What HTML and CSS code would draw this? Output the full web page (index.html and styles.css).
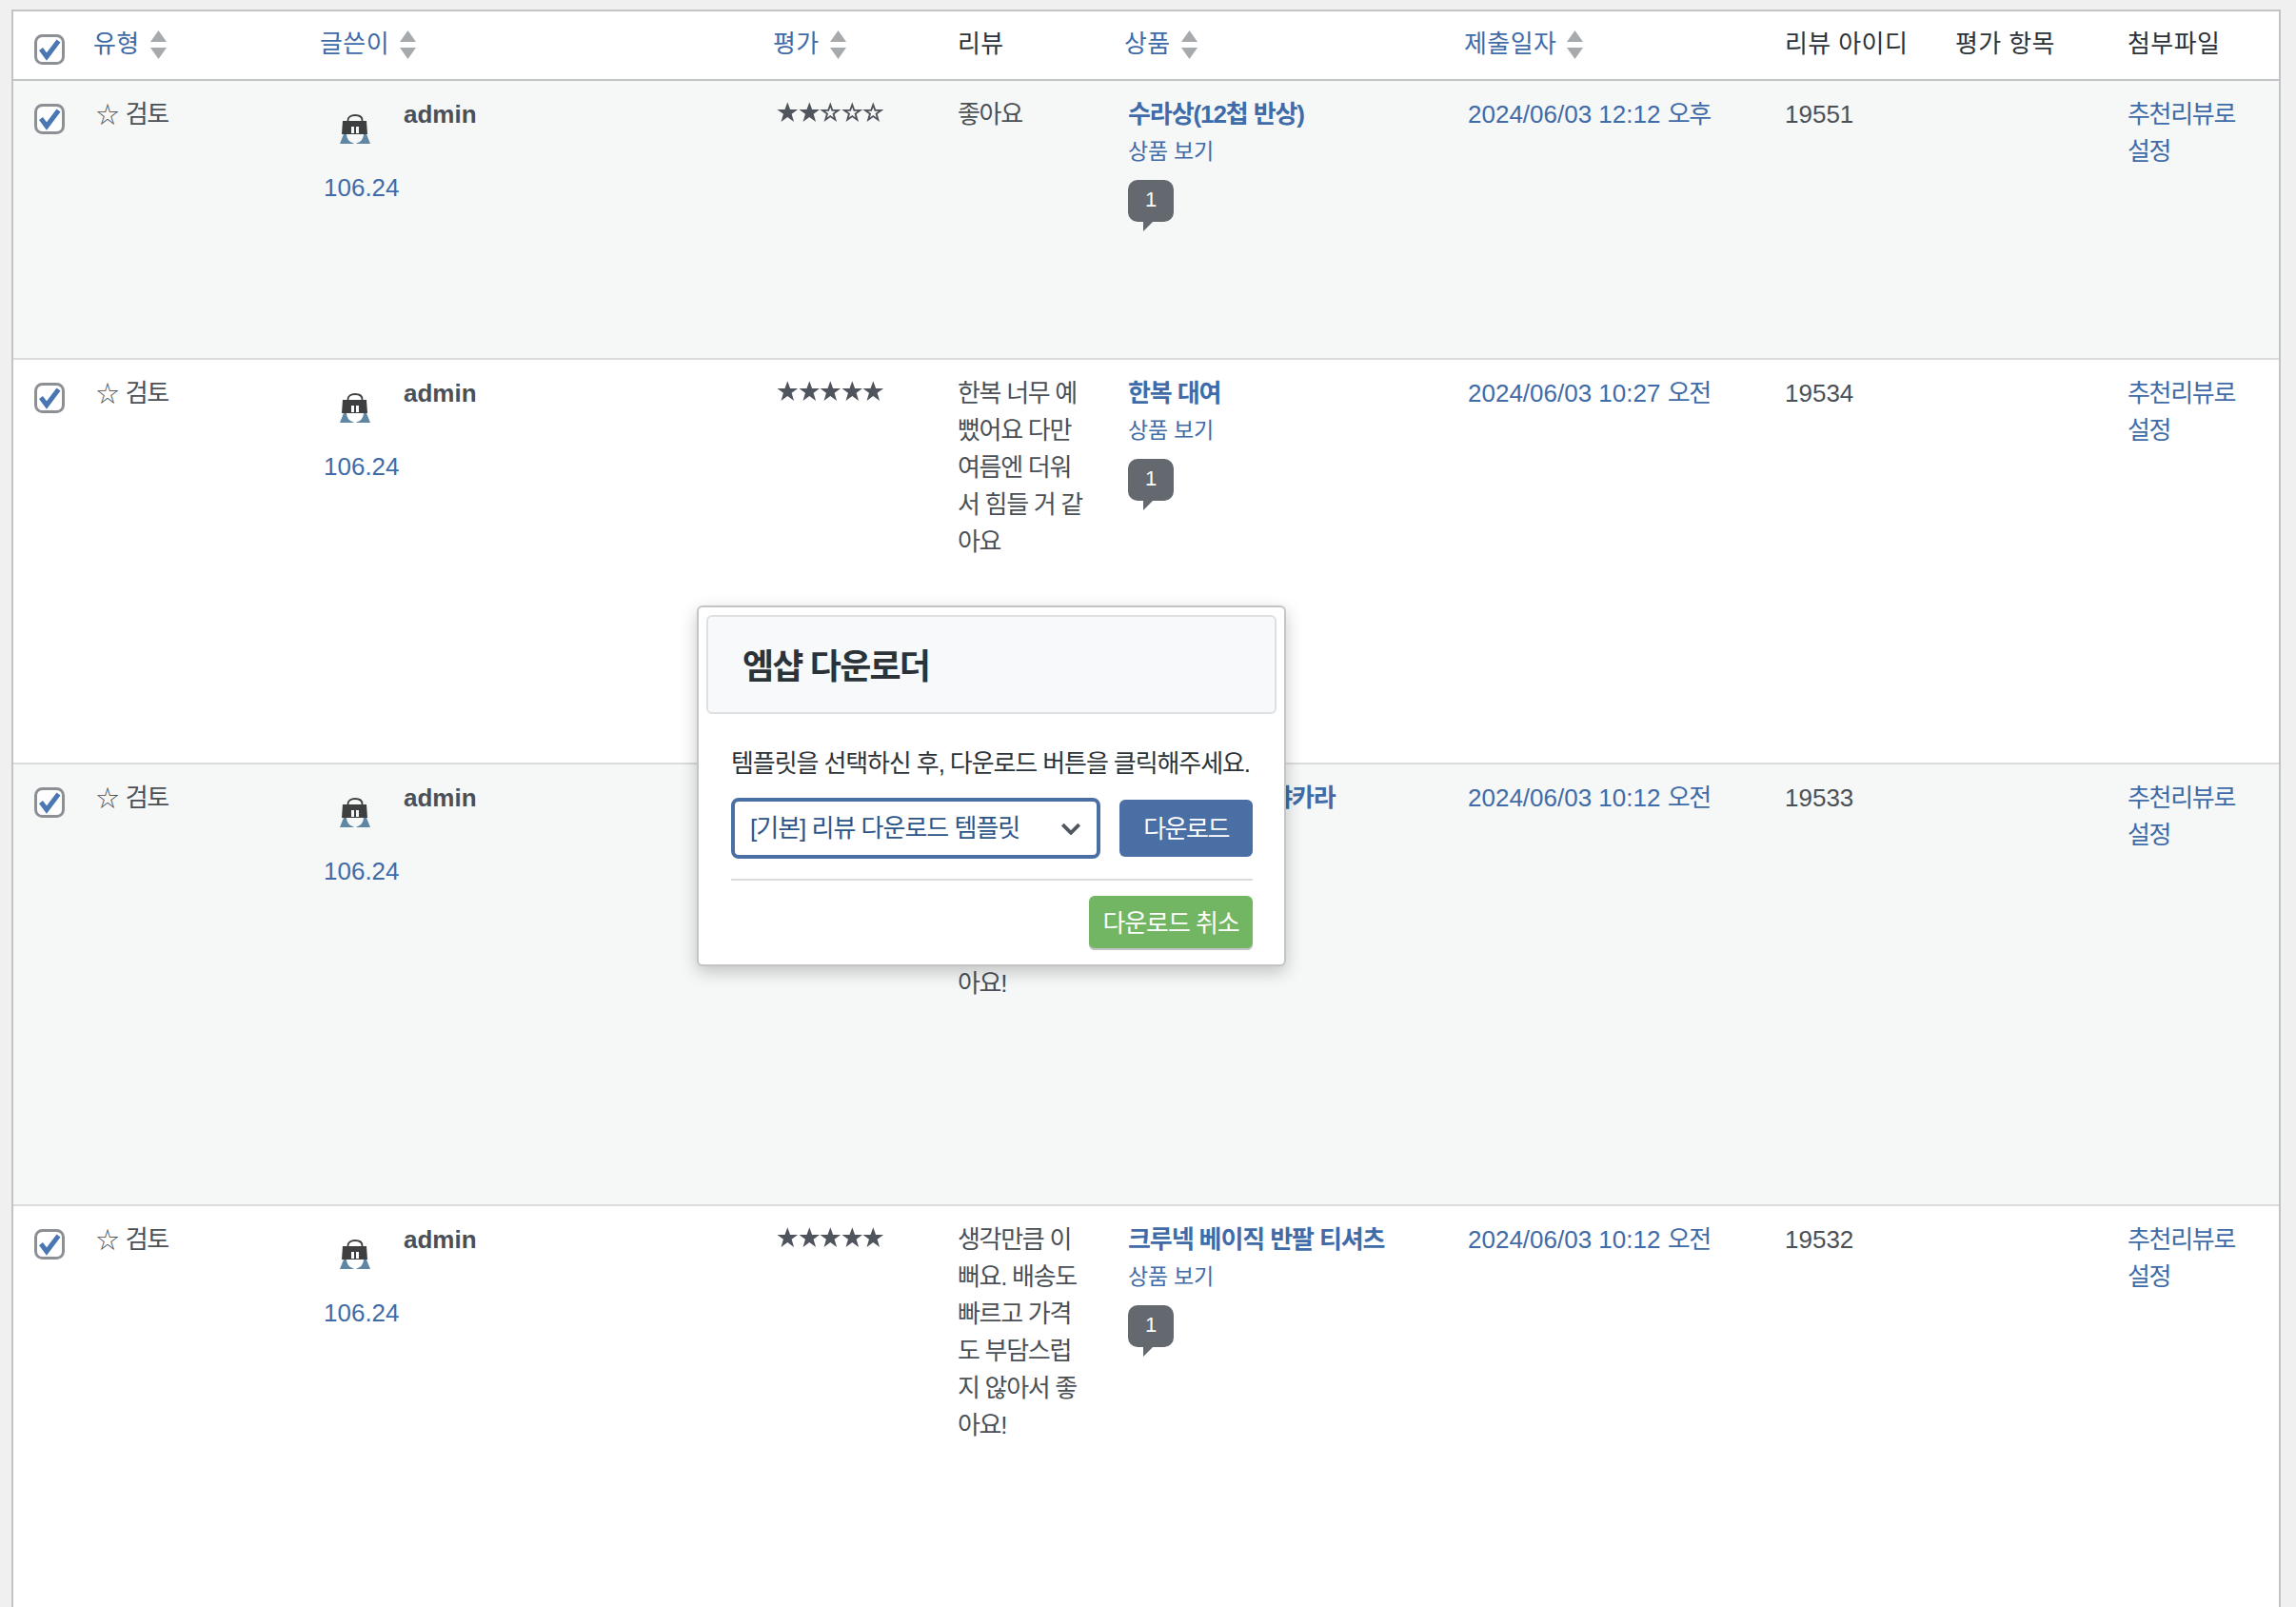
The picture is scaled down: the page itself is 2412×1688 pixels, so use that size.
FILE: index.html
```html
<!DOCTYPE html>
<html lang="ko">
<head>
<meta charset="utf-8">
<title>리뷰</title>
<link rel="stylesheet" href="styles.css">
</head>
<body>
<svg class="defs" width="0" height="0" aria-hidden="true">
  <symbol id="check" viewBox="0 0 32 32">
    <rect x="1.500" y="1.500" width="29" height="29" rx="7" fill="#fff" fill-opacity=".75" stroke="#8c8f94" stroke-width="3"/>
    <path d="M7 15.500l6 8L25.500 7" fill="none" stroke="#4a77b4" stroke-width="5"/>
  </symbol>
  <symbol id="bag" viewBox="0 0 32 32">
    <path d="M8.500 8V6.500C8.500 3 11.500 1 16 1s7.500 2 7.500 5.500V8" fill="none" stroke="#3e3f41" stroke-width="1.800"/>
    <path fill-rule="evenodd" d="M3 7h25l1 14H2zM12 13v7h3v-7zM17 13v7h3v-7z" fill="#3e3f41"/>
    <path d="M0 31L4 21h3a9 9.500 0 0 0 7.500 9.400L14.500 31zM32 31L28 21h-3a9 9.500 0 0 1 -7.500 9.400L17.500 31z" fill="#5f87a3"/>
  </symbol>
  <symbol id="bubble" viewBox="0 0 48 54">
    <path d="M10 0h28a10 10 0 0 1 10 10v24a10 10 0 0 1 -10 10H26L16 54V44h-6a10 10 0 0 1 -10 -10V10A10 10 0 0 1 10 0z" fill="#646970"/>
  </symbol>
  <symbol id="sort" viewBox="0 0 17 30">
    <path d="M8.500 0L17 12H0zM0 18h17L8.500 30z" fill="#a7aaad"/>
  </symbol>
  <symbol id="star-full" viewBox="0 0 24 24">
    <path d="M12 .500l3 8.200h8.500l-6.900 5.200 2.600 8.600L12 17.400l-7.200 5.100 2.600-8.600L.500 8.700H9z" fill="#50545c"/>
  </symbol>
  <symbol id="star-empty" viewBox="0 0 24 24">
    <path d="M12 3.500l2.200 6.200h6.600l-5.300 4 1.900 6.500L12 16.300l-5.400 3.900 1.900-6.500-5.300-4h6.600z" fill="none" stroke="#50545c" stroke-width="2"/>
  </symbol>
</svg>

<main class="page">
  <table class="reviews">
    <colgroup>
      <col class="c-check"><col class="c-type"><col class="c-author"><col class="c-rating"><col class="c-review"><col class="c-product"><col class="c-date"><col class="c-id"><col class="c-items"><col class="c-files">
    </colgroup>
    <thead>
      <tr>
        <th class="check"><svg class="cb"><use href="#check"/></svg></th>
        <th class="sortable first"><a href="#">유형<svg class="sort"><use href="#sort"/></svg></a></th>
        <th class="sortable"><a href="#">글쓴이<svg class="sort"><use href="#sort"/></svg></a></th>
        <th class="sortable"><a href="#">평가<svg class="sort"><use href="#sort"/></svg></a></th>
        <th>리뷰</th>
        <th class="sortable"><a href="#">상품<svg class="sort"><use href="#sort"/></svg></a></th>
        <th class="sortable"><a href="#">제출일자<svg class="sort"><use href="#sort"/></svg></a></th>
        <th>리뷰 아이디</th>
        <th>평가 항목</th>
        <th>첨부파일</th>
      </tr>
    </thead>
    <tbody>
      <tr class="row-a stripe">
        <td class="check"><svg class="cb"><use href="#check"/></svg></td>
        <td class="ko"><span class="star">☆</span> 검토</td>
        <td><div class="author"><svg class="avatar"><use href="#bag"/></svg><strong>admin</strong></div><a class="ip" href="#">106.24</a></td>
        <td class="stars"><svg><use href="#star-full"/></svg><svg><use href="#star-full"/></svg><svg><use href="#star-empty"/></svg><svg><use href="#star-empty"/></svg><svg><use href="#star-empty"/></svg></td>
        <td class="ko">좋아요</td>
        <td><a class="pname" href="#">수라상(12첩 반상)</a><a class="view" href="#">상품 보기</a><div class="bubble"><svg><use href="#bubble"/></svg><span>1</span></div></td>
        <td><a href="#">2024/06/03 12:12 <span class="ko">오후</span></a></td>
        <td>19551</td>
        <td></td>
        <td class="ko"><a href="#">추천리뷰로<br>설정</a></td>
      </tr>
      <tr class="row-b">
        <td class="check"><svg class="cb"><use href="#check"/></svg></td>
        <td class="ko"><span class="star">☆</span> 검토</td>
        <td><div class="author"><svg class="avatar"><use href="#bag"/></svg><strong>admin</strong></div><a class="ip" href="#">106.24</a></td>
        <td class="stars"><svg><use href="#star-full"/></svg><svg><use href="#star-full"/></svg><svg><use href="#star-full"/></svg><svg><use href="#star-full"/></svg><svg><use href="#star-full"/></svg></td>
        <td class="ko">한복 너무 예<br>뻤어요 다만<br>여름엔 더워<br>서 힘들 거 같<br>아요</td>
        <td><a class="pname" href="#">한복 대여</a><a class="view" href="#">상품 보기</a><div class="bubble"><svg><use href="#bubble"/></svg><span>1</span></div></td>
        <td><a href="#">2024/06/03 10:27 <span class="ko">오전</span></a></td>
        <td>19534</td>
        <td></td>
        <td class="ko"><a href="#">추천리뷰로<br>설정</a></td>
      </tr>
      <tr class="row-c stripe">
        <td class="check"><svg class="cb"><use href="#check"/></svg></td>
        <td class="ko"><span class="star">☆</span> 검토</td>
        <td><div class="author"><svg class="avatar"><use href="#bag"/></svg><strong>admin</strong></div><a class="ip" href="#">106.24</a></td>
        <td class="stars"><svg><use href="#star-full"/></svg><svg><use href="#star-full"/></svg><svg><use href="#star-full"/></svg><svg><use href="#star-full"/></svg><svg><use href="#star-full"/></svg></td>
        <td class="ko">생각만큼 이<br>뻐요. 배송도<br>빠르고 가격<br>도 부담스럽<br>지 않아서 좋<br>아요!</td>
        <td><a class="pname" href="#">크루넥 베이직 샤카라</a><a class="view" href="#">상품 보기</a><div class="bubble"><svg><use href="#bubble"/></svg><span>1</span></div></td>
        <td><a href="#">2024/06/03 10:12 <span class="ko">오전</span></a></td>
        <td>19533</td>
        <td></td>
        <td class="ko"><a href="#">추천리뷰로<br>설정</a></td>
      </tr>
      <tr class="row-d">
        <td class="check"><svg class="cb"><use href="#check"/></svg></td>
        <td class="ko"><span class="star">☆</span> 검토</td>
        <td><div class="author"><svg class="avatar"><use href="#bag"/></svg><strong>admin</strong></div><a class="ip" href="#">106.24</a></td>
        <td class="stars"><svg><use href="#star-full"/></svg><svg><use href="#star-full"/></svg><svg><use href="#star-full"/></svg><svg><use href="#star-full"/></svg><svg><use href="#star-full"/></svg></td>
        <td class="ko">생각만큼 이<br>뻐요. 배송도<br>빠르고 가격<br>도 부담스럽<br>지 않아서 좋<br>아요!</td>
        <td><a class="pname" href="#">크루넥 베이직 반팔 티셔츠</a><a class="view" href="#">상품 보기</a><div class="bubble"><svg><use href="#bubble"/></svg><span>1</span></div></td>
        <td><a href="#">2024/06/03 10:12 <span class="ko">오전</span></a></td>
        <td>19532</td>
        <td></td>
        <td class="ko"><a href="#">추천리뷰로<br>설정</a></td>
      </tr>
    </tbody>
  </table>

  <section class="modal">
    <header class="modal-head"><h2>엠샵 다운로더</h2></header>
    <div class="modal-body">
      <p>템플릿을 선택하신 후, 다운로드 버튼을 클릭해주세요.</p>
      <div class="controls">
        <div class="select"><span>[기본] 리뷰 다운로드 템플릿</span><svg viewBox="0 0 20 12"><path d="M2 2l8 8 8-8" fill="none" stroke="#50575e" stroke-width="3.500"/></svg></div>
        <button class="btn btn-blue" type="button">다운로드</button>
      </div>
      <div class="foot"><button class="btn btn-green" type="button">다운로드 취소</button></div>
    </div>
  </section>
</main>
</body>
</html>
```

FILE: styles.css
```css
* { box-sizing: border-box; }
html, body { margin: 0; height: 100%; overflow: hidden; }
body {
  background: #f0f0f1;
  color: #4a5056;
  font: 26px/39px "Liberation Sans", "Noto Sans CJK KR", sans-serif;
}
.defs { position: absolute; }
.page { position: relative; padding: 10px 16px 0 12px; height: 1688px; overflow: hidden; }
a { color: #3f6ba8; text-decoration: none; }
.ko { letter-spacing: -1.300px; white-space: nowrap; }

.reviews {
  width: 100%;
  table-layout: fixed;
  border-collapse: separate;
  border-spacing: 0;
  background: #fff;
  border: 2px solid #c3c4c7;
  border-bottom: 0;
}
.c-check { width: 66px; }
.c-type { width: 240px; }
.c-author { width: 476px; }
.c-rating { width: 190px; }
.c-review { width: 179px; }
.c-product { width: 357px; }
.c-date { width: 333px; }
.c-id { width: 179px; }
.c-items { width: 181px; }

th {
  height: 73px;
  padding: 15px 20px 0;
  font-weight: 400;
  text-align: left;
  vertical-align: top;
  color: #2c3338;
  border-bottom: 2px solid #c3c4c7;
  white-space: nowrap;
  letter-spacing: .4px;
}
th.sortable { padding-left: 16px; }
th.first { padding-left: 18px; }
th a { display: inline-flex; align-items: center; }
td { padding: 16px 20px 0; vertical-align: top; border-bottom: 2px solid #dcdcde; }
th.check, td.check { padding: 0 0 0 22px; }
.cb { display: block; width: 32px; height: 32px; margin-top: 24px; }
.sort { width: 17px; height: 30px; margin-left: 11px; }

.stripe td { background: #f6f7f7; }
.row-a { height: 293px; }
.row-b { height: 425px; }
.row-c { height: 464px; }
.row-d { height: 600px; }

.star { font-family: "Noto Sans CJK KR", sans-serif; font-size: 24px; line-height: 0; margin-left: 1px; margin-right: 2px; }
.author { display: flex; align-items: flex-start; height: 77px; }
.author strong { font-weight: 700; }
.avatar { width: 32px; height: 32px; flex: none; margin: 19px 35px 0 17px; }
.ip { display: block; }
.stars { white-space: nowrap; padding-top: 21px; }
.stars svg { display: inline-block; width: 22.600px; height: 24px; vertical-align: top; }
.pname { display: block; font-weight: 700; white-space: nowrap; letter-spacing: -1.100px; }
.view { display: block; font-size: 23px; letter-spacing: -.200px; }
.bubble { position: relative; width: 48px; height: 54px; margin-top: 10px; }
.bubble svg { display: block; width: 48px; height: 54px; }
.bubble span { position: absolute; left: 0; top: 0; width: 48px; height: 44px; text-align: center; color: #fff; font-size: 22px; line-height: 42px; }

.modal {
  position: absolute;
  left: 732px;
  top: 636px;
  width: 619px;
  height: 379px;
  padding: 8px;
  background: #fff;
  border: 2px solid #c3c4c7;
  border-radius: 6px;
  box-shadow: 0 6px 18px rgba(0, 0, 0, .22);
  color: #2c3338;
}
.modal-head {
  height: 104px;
  padding: 0 36px;
  display: flex;
  align-items: center;
  background: #f8f9fa;
  border: 2px solid #dfe0e2;
  border-radius: 6px;
}
.modal-head h2 { margin: 6px 0 0; font-size: 36px; font-weight: 700; line-height: 1.2; letter-spacing: -1.800px; }
.modal-body { padding: 33px 25px 0 26px; }
.modal-body p { margin: 0; font-size: 26px; line-height: 39px; white-space: nowrap; letter-spacing: -1.100px; }
.controls { display: flex; justify-content: space-between; align-items: center; margin-top: 16px; padding-bottom: 21px; border-bottom: 2px solid #dcdcde; }
.select {
  width: 388px;
  height: 64px;
  padding: 0 16px;
  display: flex;
  align-items: center;
  justify-content: space-between;
  border: 4px solid #4a6fa5;
  border-radius: 8px;
  color: #2c5488;
  font-size: 26px;
  white-space: nowrap;
  letter-spacing: -1px;
}
.select svg { width: 22px; height: 13px; flex: none; }
.btn {
  font: inherit;
  font-family: "Noto Sans CJK KR", sans-serif;
  font-size: 26px;
  line-height: 1;
  color: #fff;
  border: 0;
  border-radius: 6px;
  padding: 0 0 3px;
  white-space: nowrap;
}
.btn-blue { width: 140px; height: 60px; background: #4a6fa5; letter-spacing: -1.500px; }
.btn-green { width: 172px; height: 57px; background: #72b562; box-shadow: inset 0 -2px 0 #c3c4c7; letter-spacing: -1.100px; }
.foot { display: flex; justify-content: flex-end; margin-top: 16px; }
```
